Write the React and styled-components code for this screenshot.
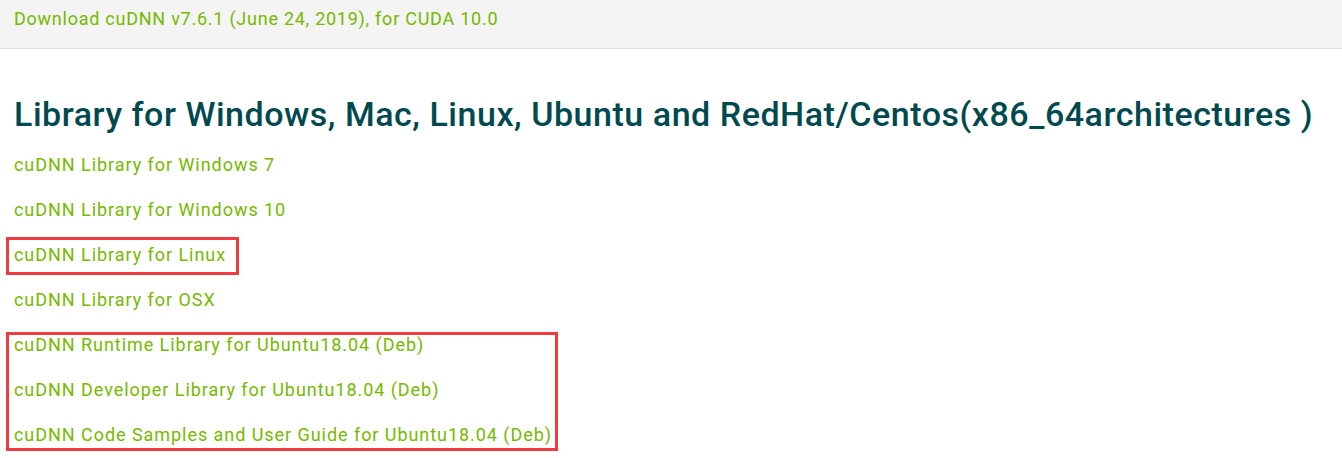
import React from "react";
import styled, { createGlobalStyle } from "styled-components";

const GlobalStyle = createGlobalStyle`
  html, body { margin: 0; padding: 0; background: #ffffff; }
  body { font-family: Roboto, "Liberation Sans", sans-serif; }
`;

const Page = styled.div`
  width: 1342px;
  min-height: 458px;
  background: #fff;
`;

const TopBar = styled.div`
  box-sizing: border-box;
  height: 49px;
  padding: 9px 14px 0;
  background: #f4f4f4;
  border-bottom: 1px solid #dedede;
`;

const Link = styled.a`
  display: block;
  font-size: 18px;
  line-height: 20px;
  color: #76b900;
  text-decoration: none;
  white-space: nowrap;
  letter-spacing: ${(p) => p.$ls || "0.95px"};
`;

const Content = styled.div`
  padding: 45px 14px 0;
`;

const Heading = styled.h1`
  margin: 0 0 21px;
  font-size: 34px;
  line-height: 40px;
  font-weight: 500;
  letter-spacing: 0.53px;
  color: #004a4f;
  white-space: nowrap;
`;

const List = styled.div`
  display: flex;
  flex-direction: column;
  align-items: flex-start;
  gap: 25px;
`;

const Highlight = styled.div`
  display: flex;
  flex-direction: column;
  align-items: flex-start;
  gap: 25px;
  border: 3px solid #ef3d3d;
  margin: ${(p) => p.$margin};
  padding: ${(p) => p.$padding};
`;

const links = {
  win7: "cuDNN Library for Windows 7",
  win10: "cuDNN Library for Windows 10",
  linux: "cuDNN Library for Linux",
  osx: "cuDNN Library for OSX",
  runtime: "cuDNN Runtime Library for Ubuntu18.04 (Deb)",
  dev: "cuDNN Developer Library for Ubuntu18.04 (Deb)",
  samples: "cuDNN Code Samples and User Guide for Ubuntu18.04 (Deb)",
};

export default function App() {
  return (
    <Page>
      <GlobalStyle />
      <TopBar>
        <Link href="#" $ls="0.75px">Download cuDNN v7.6.1 (June 24, 2019), for CUDA 10.0</Link>
      </TopBar>
      <Content>
        <Heading>
          Library for Windows, Mac, Linux, Ubuntu and RedHat/Centos(x86_64architectures )
        </Heading>
        <List>
          <Link href="#">{links.win7}</Link>
          <Link href="#">{links.win10}</Link>
          <Highlight $margin="-8px 0 -10px -8px" $padding="5px 10px 7px 5px">
            <Link href="#">{links.linux}</Link>
          </Highlight>
          <Link href="#">{links.osx}</Link>
          <Highlight $margin="-3px 0 -6px -8px" $padding="0 3px 3px 5px">
            <Link href="#">{links.runtime}</Link>
            <Link href="#">{links.dev}</Link>
            <Link href="#">{links.samples}</Link>
          </Highlight>
        </List>
      </Content>
    </Page>
  );
}
